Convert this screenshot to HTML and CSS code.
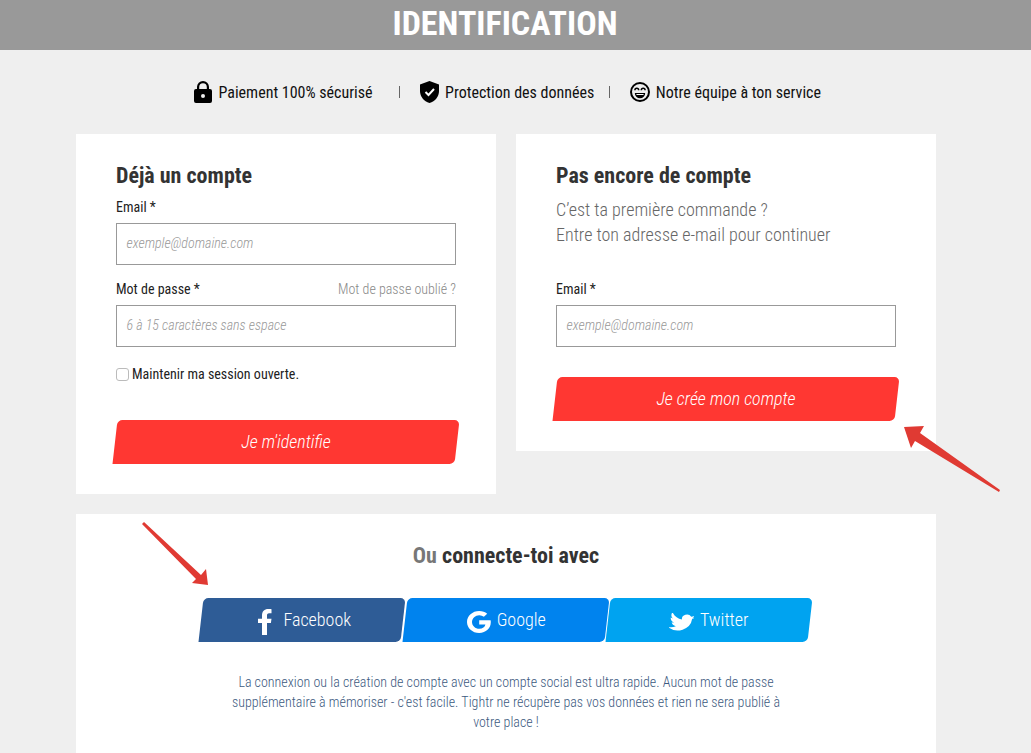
FILE: index.html
```html
<!DOCTYPE html>
<html lang="fr">
<head>
<meta charset="utf-8">
<title>Identification</title>
<link rel="stylesheet" href="styles.css">
</head>
<body>
<header class="banner"><h1>IDENTIFICATION</h1></header>
<div class="trust">
  <div class="trust-item t1">
    <svg width="18" height="22" viewBox="0 0 18 22"><path d="M3 8V6a6 6 0 0 1 12 0v2h1a2 2 0 0 1 2 2v10a2 2 0 0 1-2 2H2a2 2 0 0 1-2-2V10a2 2 0 0 1 2-2zm2.200 0h7.600V6a3.800 3.800 0 0 0-7.600 0zM9 13a2 2 0 1 0 0 4 2 2 0 0 0 0-4z" fill="#000" fill-rule="evenodd"/></svg>
    <span>Paiement 100% sécurisé</span>
  </div>
  <i class="sep s1"></i>
  <div class="trust-item t2">
    <svg width="19" height="22" viewBox="0 0 19 22"><path d="M9.500 0 19 3.500V10c0 5.600-3.800 10.200-9.500 12C3.800 20.200 0 15.600 0 10V3.500z" fill="#000"/><path d="m5.500 11 3 3 5.500-6" fill="none" stroke="#fff" stroke-width="2"/></svg>
    <span>Protection des données</span>
  </div>
  <i class="sep s2"></i>
  <div class="trust-item t3">
    <svg width="20" height="20" viewBox="0 0 20 20"><circle cx="10" cy="10" r="9" fill="none" stroke="#000" stroke-width="2"/><path d="M4.900 8.200a1.900 1.900 0 0 1 3.800 0M11.300 8.200a1.900 1.900 0 0 1 3.800 0" fill="none" stroke="#000" stroke-width="1.500"/><path d="M4.800 11h10.400a5.200 5.200 0 0 1-10.400 0z"/><path d="M6.200 12h7.600l-.5 1H6.700z" fill="#fff"/></svg>
    <span>Notre équipe à ton service</span>
  </div>
</div>
<main class="page">
  <div class="columns">
    <section class="card login">
      <h2>Déjà un compte</h2>
      <label class="lab lab-first">Email *</label>
      <div class="input">exemple@domaine.com</div>
      <div class="lab-row"><label class="lab">Mot de passe *</label><a class="forgot">Mot de passe oublié ?</a></div>
      <div class="input">6 à 15 caractères sans espace</div>
      <div class="keep"><span class="check"></span><span>Maintenir ma session ouverte.</span></div>
      <button class="cta cta-login"><span>Je m'identifie</span></button>
    </section>
    <section class="card signup">
      <h2>Pas encore de compte</h2>
      <p class="intro">C’est ta première commande ?<br>Entre ton adresse e-mail pour continuer</p>
      <label class="lab lab-signup">Email *</label>
      <div class="input">exemple@domaine.com</div>
      <button class="cta cta-signup"><span>Je crée mon compte</span></button>
    </section>
  </div>
  <section class="card social">
    <h3><span class="ou">Ou</span> connecte-toi avec</h3>
    <div class="social-row">
      <a class="soc fb">
        <svg width="14" height="26" viewBox="0 0 14 27" preserveAspectRatio="none"><path d="M4 27V14.500H0V10h4V6.500C4 2.500 6.400 0 10.200 0c1.500 0 2.800.1 3.300.2v4.300h-2.400C9.300 4.500 9 5.500 9 6.900V10h4.500l-.6 4.500H9V27z" fill="#fff"/></svg>
        <span class="fb-label">Facebook</span>
      </a>
      <a class="soc go">
        <svg width="24" height="22" viewBox="0 0 24 24" preserveAspectRatio="none"><path d="M12.200 0c3.200 0 5.900 1.100 8 3.100l-3.300 3.300a6.800 6.800 0 0 0-4.700-1.800C8.400 4.600 5 7.900 5 12s3.400 7.400 7.200 7.400c3.500 0 5.800-2 6.200-4.700h-6.200v-4.500h11.400c.2.700.2 1.400.2 2.200C23.800 19 19 24 12.200 24 5.400 24 0 18.600 0 12S5.400 0 12.200 0z" fill="#fff"/></svg>
        <span>Google</span>
      </a>
      <a class="soc tw">
        <svg width="25" height="18" viewBox="0 0 25 20" preserveAspectRatio="none"><path transform="rotate(10 12.500 10)" d="M25 3.300c-.9.400-1.900.7-2.900.8 1-.6 1.800-1.600 2.200-2.800-1 .6-2.100 1-3.200 1.200A5.100 5.100 0 0 0 12.400 7.200C8.200 7 4.400 5 1.800.9c-1.300 2.300-.6 5.200 1.600 6.700-.8 0-1.600-.2-2.300-.6 0 2.400 1.700 4.500 4.100 5-.7.200-1.500.2-2.300.1.600 2 2.500 3.500 4.800 3.500A10.300 10.300 0 0 1 0 17.700 14.500 14.500 0 0 0 22.400 5c1-.4 1.900-1 2.600-1.700z" fill="#fff"/></svg>
        <span>Twitter</span>
      </a>
    </div>
    <p class="note">La connexion ou la création de compte avec un compte social est ultra rapide. Aucun mot de passe supplémentaire à mémoriser - c'est facile. Tightr ne récupère pas vos données et rien ne sera publié à votre place !</p>
  </section>
</main>
<svg class="arrow arrow-a" width="100" height="72" viewBox="0 0 100 72"><path d="M0 2 20 1 16 8 96 65 95 67 11 16 7 23z" fill="#e03a33"/></svg>
<svg class="arrow arrow-b" width="72" height="68" viewBox="0 0 72 68"><path d="M4 1 61 54 66 48 68 64 52 62 56 58 2 3z" fill="#e03a33"/></svg>
</body>
</html>
```

FILE: styles.css
```css
* { box-sizing: border-box; }
html, body { margin: 0; height: 753px; overflow: hidden; }
body {
  position: relative;
  background: #efefef;
  color: #333;
  font-family: Roboto, "Liberation Sans", sans-serif;
  font-stretch: 75%;
}
.banner { height: 50px; background: #999; text-align: center; }
.banner h1 {
  margin: 0;
  padding-right: 21px;
  color: #fff;
  font-size: 34px;
  line-height: 47px;
  font-weight: 700;
}
.trust {
  display: flex;
  align-items: center;
  height: 84px;
  padding-left: 194px;
  color: #111;
  font-size: 16px;
}
.trust-item { display: flex; align-items: center; gap: 6px; }
.sep { width: 1px; height: 12px; background: #666; }
.s1 { margin: 0 20px 0 26.500px; }
.s2 { margin: 0 20px 0 15px; }
.t1 { gap: 6.500px; }
.t3 { gap: 5.500px; }
.page { width: 860px; margin: 0 0 0 76px; }
.columns { display: flex; gap: 20px; align-items: flex-start; }
.card { background: #fff; }
.login, .signup { width: 420px; padding: 28px 40px 0; }
.login { height: 360px; }
.signup { height: 317px; }
h2 { margin: 0; font-size: 22px; line-height: 27px; font-weight: 700; color: #333; }
.lab { display: block; font-size: 14px; line-height: 18px; color: #222; }
.lab-first { margin-top: 9px; margin-bottom: 7px; }
.lab-row { display: flex; justify-content: space-between; margin-top: 15px; margin-bottom: 7px; }
.forgot { font-size: 14px; line-height: 18px; color: #888; font-weight: 300; }
.input {
  height: 42px;
  border: 1px solid #999;
  padding-left: 9.500px;
  line-height: 39px;
  font-size: 14px;
  font-style: italic;
  font-weight: 300;
  color: #999;
}
.keep { display: flex; align-items: center; gap: 3px; margin-top: 18px; font-size: 14px; line-height: 18px; color: #222; }
.check { width: 13px; height: 13px; border: 1px solid #bbb; border-radius: 3px; background: #fff; }
.cta {
  display: block;
  position: relative;
  width: 340px;
  height: 44px;
  border: 0;
  padding: 0 0 2px;
  background: none;
  color: #fff;
  font: inherit;
  font-size: 18px;
  font-style: italic;
  font-weight: 300;
}
.cta::before, .soc::before {
  content: "";
  position: absolute;
  inset: 0;
  transform: skewX(-6.500deg);
  border-radius: 5px 5px 5px 0;
  background: #ff3732;
}
.cta::before { left: -1px; right: -1px; }
.cta span, .soc span, .soc svg { position: relative; }
.cta-login { margin-top: 37px; }
.cta-signup { margin-top: 30px; }
.intro { margin: 8px 0 0; font-size: 18px; line-height: 25px; font-weight: 300; color: #666; }
.lab-signup { margin-top: 33px; margin-bottom: 7px; }
.social { height: 300px; margin-top: 20px; padding-top: 28px; }
h3 { margin: 0; text-align: center; font-size: 22px; line-height: 28px; font-weight: 700; color: #333; }
.ou { color: #777; }
.social-row { display: flex; gap: 2px; margin: 28px 0 0 125px; }
.soc {
  position: relative;
  width: 201.500px;
  height: 44px;
  padding-bottom: 2px;
  display: flex;
  align-items: center;
  justify-content: center;
  gap: 6px;
  color: #fff;
  font-size: 18px;
  font-weight: 300;
}
.soc svg { margin-top: 5px; }
.fb::before { background: #2e5c96; }
.go::before { background: #0083ee; }
.tw::before { background: #00a3f0; }
.fb { gap: 11px; padding-left: 6px; }
.go { padding-left: 2px; }
.note {
  width: 560px;
  margin: 30px auto 0;
  text-align: center;
  font-size: 14px;
  line-height: 20px;
  font-weight: 300;
  color: #3d5a80;
}
.arrow { position: absolute; }
.arrow-a { left: 904px; top: 425px; }
.arrow-b { left: 140px; top: 521px; }
```
